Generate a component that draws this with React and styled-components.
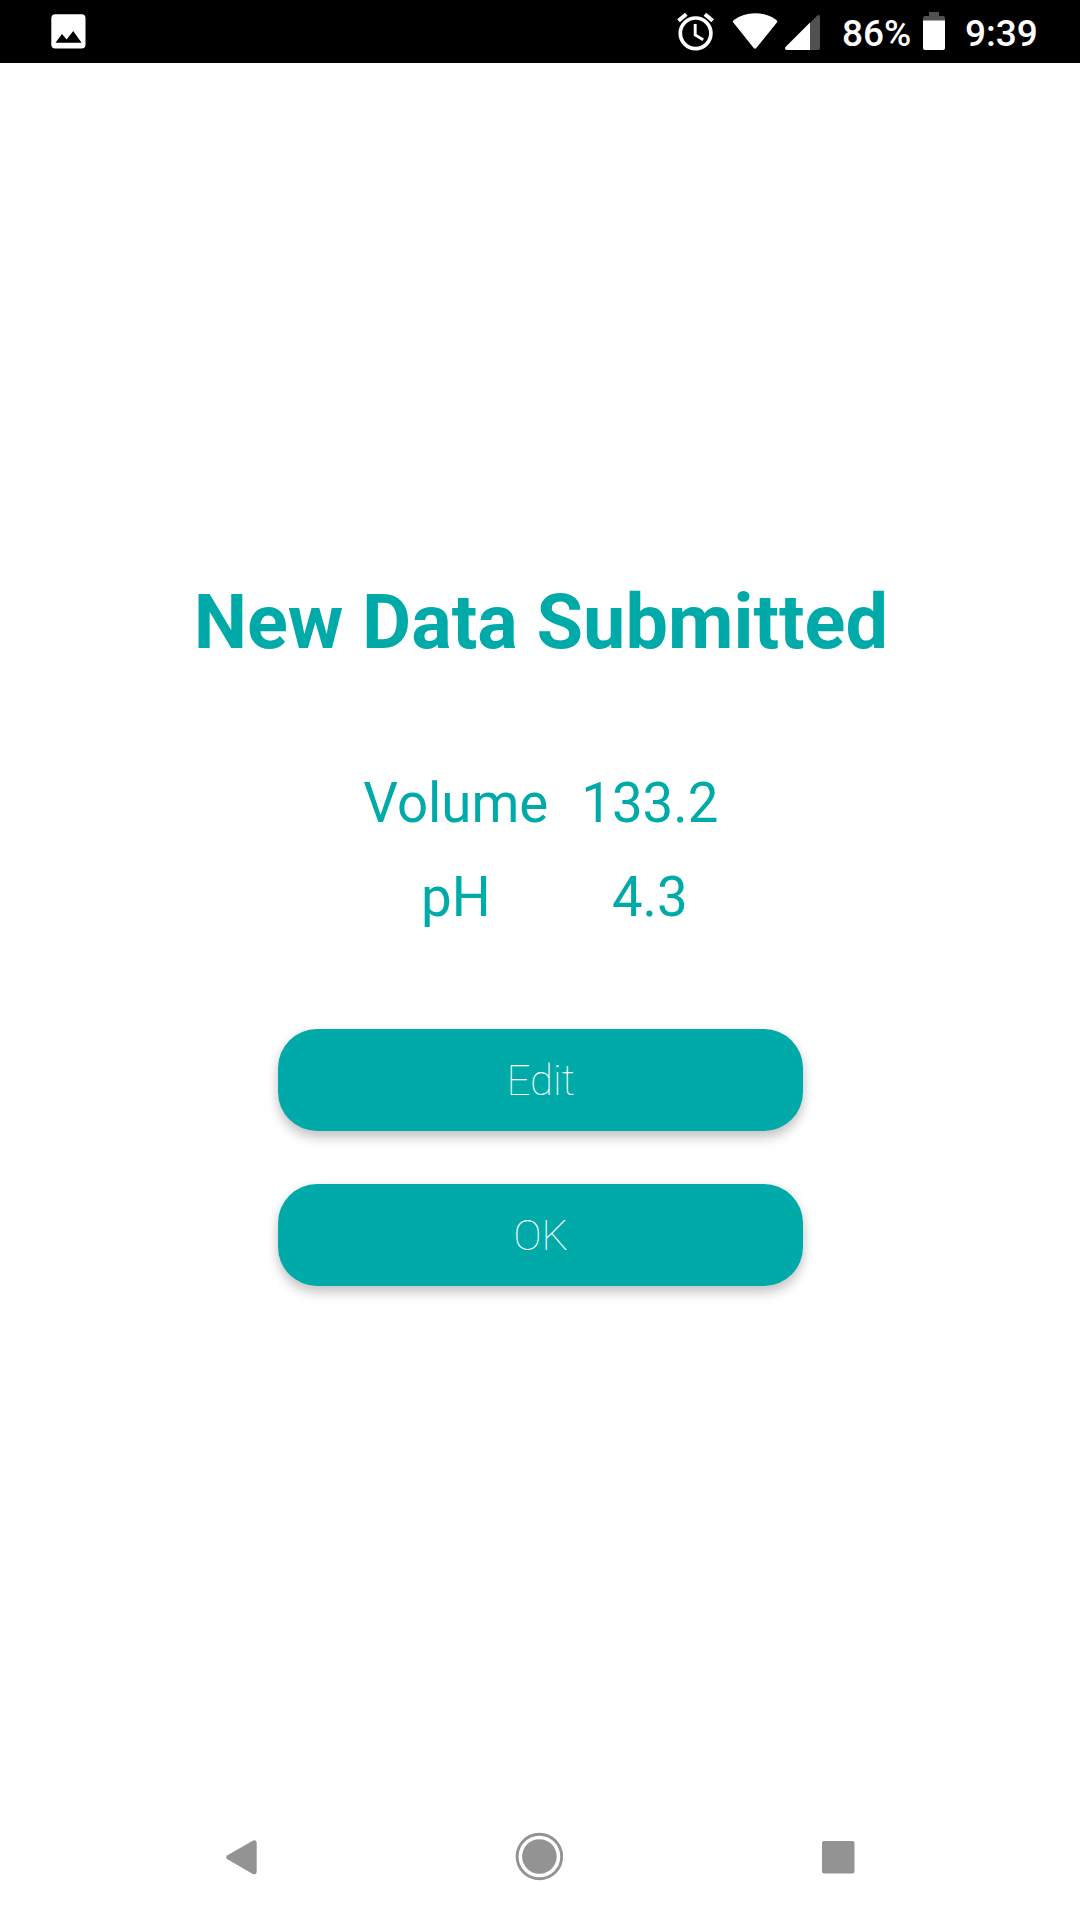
import React from "react";
import styled, { createGlobalStyle } from "styled-components";

const teal = "#00aaa8";

const GlobalStyle = createGlobalStyle`
  body { margin: 0; background: #fff; }
  * { box-sizing: border-box; }
`;

const Screen = styled.div`
  display: flex;
  flex-direction: column;
  width: 1080px;
  height: 1920px;
  overflow: hidden;
  background: #fff;
  color: ${teal};
  font-family: Roboto, "Liberation Sans", sans-serif;
`;

const StatusBar = styled.header`
  display: flex;
  justify-content: space-between;
  flex: none;
  height: 63px;
  padding: 0 42px 0 50px;
  background: #000;
  color: #fff;
`;

const StatusGroup = styled.div`
  display: flex;
  align-items: flex-start;
`;

const StatusText = styled.span`
  width: ${(p) => p.$width}px;
  margin-left: ${(p) => p.$gap}px;
  line-height: 68px;
  font-size: 37px;
  font-weight: 500;
  white-space: nowrap;
`;

const StatusIcon = styled.svg`
  display: block;
  flex: none;
  margin-left: ${(p) => p.$gap || 0}px;
`;

const Content = styled.main`
  display: flex;
  flex: 1;
  flex-direction: column;
  align-items: center;
  padding: 514px 0 0 1.6px;
`;

const Title = styled.h1`
  margin: 0;
  line-height: 90px;
  font-size: 75.6px;
  font-weight: 700;
  white-space: nowrap;
`;

const Readings = styled.dl`
  display: grid;
  grid-template-columns: 186px 138px;
  column-gap: 32px;
  row-gap: 28px;
  margin: 103px 0 99px;
  line-height: 66px;
  font-size: 54.6px;
  text-align: center;
  white-space: nowrap;
`;

const Label = styled.dt`
  margin: 0;
`;

const Value = styled.dd`
  margin: 0;
`;

const Actions = styled.div`
  display: flex;
  flex-direction: column;
  gap: 53px;
`;

const ActionButton = styled.button`
  width: 525px;
  height: 102px;
  padding: 0;
  border: 0;
  border-radius: 39px;
  background: ${teal};
  box-shadow: 0 7px 12px rgba(0, 0, 0, 0.2), 0 1px 12px rgba(0, 0, 0, 0.06);
  color: #fff;
  font-family: inherit;
  font-size: 42px;
  font-weight: 100;
`;

const NavBar = styled.nav`
  display: flex;
  flex: none;
  align-items: flex-start;
  justify-content: space-between;
  height: 126px;
  padding: 32px 211px 0 211px;
`;

const NavIcon = styled.svg`
  display: block;
  fill: #939393;
`;

const readings = [
  { label: "Volume", value: "133.2" },
  { label: "pH", value: "4.3" },
];

export default function App() {
  return (
    <>
      <GlobalStyle />
      <Screen>
        <StatusBar>
          <StatusGroup>
            <StatusIcon width="37" height="63" viewBox="50 0 37 63">
              <rect x="51.3" y="14.2" width="34.2" height="34.4" rx="4" fill="#fff" />
              <path d="M55.5 42.7L62 34l4.6 5.6 6.6-8.6 8.4 11.7z" fill="#000" />
            </StatusIcon>
          </StatusGroup>
          <StatusGroup>
            <StatusIcon width="38" height="63" viewBox="676 0 38 63" fill="none" stroke="#fff">
              <circle cx="695.6" cy="33.3" r="15.3" strokeWidth="3.7" />
              <path d="M678.5 20.8L686.3 14.2M712.7 20.8L704.9 14.2" strokeWidth="4" />
              <path d="M695.2 24v11l8 4.7" strokeWidth="2.9" />
            </StatusIcon>
            <StatusIcon $gap={18} width="46" height="63" viewBox="732 0 46 63" fill="#fff">
              <path d="M733.3 22.6q-1.2-1.5.5-2.6Q743 13.2 755 13.2T776.4 20q1.6 1.1.5 2.6L756.3 48q-1.3 1.5-2.6 0z" />
            </StatusIcon>
            <StatusIcon $gap={6} width="38" height="63" viewBox="784 0 38 63">
              <path d="M810 23l7-7.3q3-2 3 1V48q0 2-2 2h-8z" fill="#515151" />
              <path d="M810 22.5V50h-23.5q-2.5-.8-1-3z" fill="#fff" />
            </StatusIcon>
            <StatusText $gap={20} $width={69}>86%</StatusText>
            <StatusIcon $gap={11} width="24" height="63" viewBox="922 0 24 63">
              <path d="M929 12h10v4h4q2 0 2 2v3h-22v-3q0-2 2-2h4z" fill="#515151" />
              <path d="M923 20.5h22V48q0 2-2 2h-18q-2 0-2-2z" fill="#fff" />
            </StatusIcon>
            <StatusText $gap={19} $width={73}>9:39</StatusText>
          </StatusGroup>
        </StatusBar>

        <Content>
          <Title>New Data Submitted</Title>
          <Readings>
            {readings.map((r) => (
              <React.Fragment key={r.label}>
                <Label>{r.label}</Label>
                <Value>{r.value}</Value>
              </React.Fragment>
            ))}
          </Readings>
          <Actions>
            <ActionButton>Edit</ActionButton>
            <ActionButton>OK</ActionButton>
          </Actions>
        </Content>

        <NavBar>
          <NavIcon width="60" height="60" viewBox="211 1826 60 60">
            <path d="M227.5 1855.3q-2.6 2 0 4L252.3 1873.7q4.2 2 4.4-2V1843q-.2-4-4.4-2z" />
          </NavIcon>
          <NavIcon width="60" height="60" viewBox="510 1826 60 60">
            <circle cx="539.4" cy="1856.5" r="22.3" fill="none" stroke="#939393" strokeWidth="2.9" />
            <circle cx="539.4" cy="1856.5" r="17.3" />
          </NavIcon>
          <NavIcon width="60" height="60" viewBox="809 1826 60 60">
            <rect x="822" y="1841" width="32.5" height="32.5" rx="2" />
          </NavIcon>
        </NavBar>
      </Screen>
    </>
  );
}
